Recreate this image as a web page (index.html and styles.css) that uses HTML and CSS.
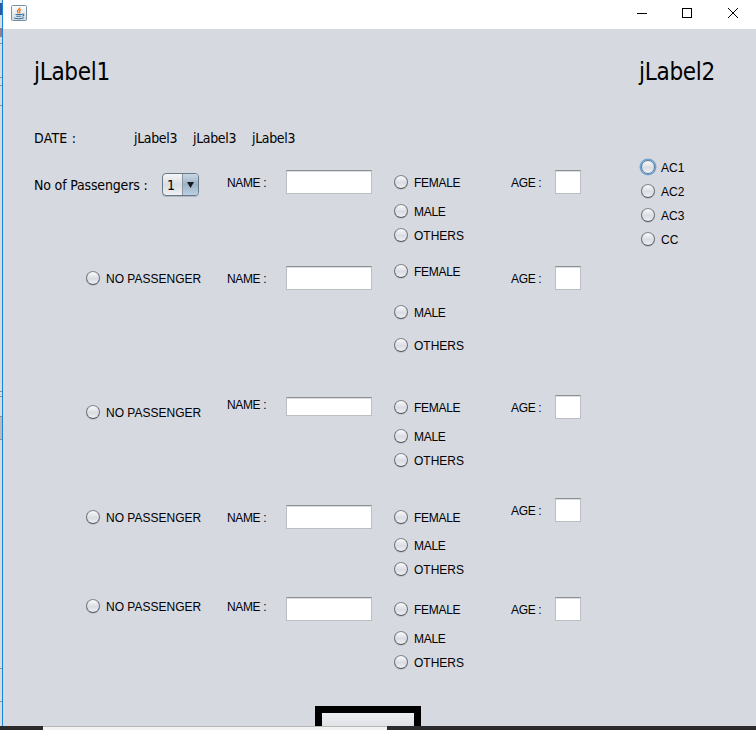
FILE: index.html
```
<!DOCTYPE html>
<html lang="en">
<head>
<meta charset="utf-8">
<title>Passengers</title>
<link rel="stylesheet" href="styles.css">
</head>
<body>
<div class="desktop">
  <div class="edge"><i class="e1"></i><i class="e2"></i><i class="e3"></i><i class="e4"></i><i class="e5"></i><i class="e6"></i><i class="e7"></i><i class="e8"></i><i class="e9"></i><i class="e10"></i></div>
  <div class="window">
    <header class="titlebar">
      <svg class="java" width="16" height="16" viewBox="0 0 16 16">
        <defs><linearGradient id="tile" x2="0" y2="1"><stop offset="0" stop-color="#fff"/><stop offset="1" stop-color="#cfdae2"/></linearGradient></defs>
        <rect x=".5" y=".5" width="15" height="15" rx="1" fill="url(#tile)" stroke="#7590a6"/>
        <path d="M8.800 2.500C9 4 6.200 5 6.400 6.400c.1.7.8 1.100 1 1.900M10.300 4.700C8.400 5.200 8.200 6 8.800 6.900c.4.5 0 1-.5 1.400" fill="none" stroke="#e8791e" stroke-width="1.300"/>
        <path d="M4.500 9.500h6.500M5.200 11.200h5M3.200 13c2 .7 7 .7 9.600-.2M11.200 9.200c2.300-.6 2.200 1.600.2 2" fill="none" stroke="#3d6f97" stroke-width="1.100"/>
      </svg>
      <svg class="controls" width="102" height="12" viewBox="0 0 102 12" fill="none" stroke="#000">
        <path d="M0 6.500h10M45.500 1.500h9v9h-9z" shape-rendering="crispEdges"/>
        <path d="M91 1l10 10M101 1l-10 10"/>
      </svg>
    </header>
    <main class="form">
      <div class="heading"><h1>jLabel1</h1><h1>jLabel2</h1></div>
      <div class="dates"><span class="date">DATE :</span><span>jLabel3</span><span>jLabel3</span><span>jLabel3</span></div>
      <div class="columns">
        <div class="passengers">
          <section class="row r1">
            <div class="count"><span>No of Passengers :</span><div class="combo"><span>1</span><b><svg width="7" height="6"><path d="M0 0h7L3.500 6z" fill="#15181c"/></svg></b></div></div>
            <span class="name">NAME :</span><span class="field"></span>
            <div class="gender"><label class="radio">FEMALE</label><label class="radio">MALE</label><label class="radio">OTHERS</label></div>
            <span class="age">AGE :</span><span class="field agefield"></span>
          </section>
          <section class="row r2">
            <label class="radio none">NO PASSENGER</label>
            <span class="name">NAME :</span><span class="field"></span>
            <div class="gender"><label class="radio">FEMALE</label><label class="radio">MALE</label><label class="radio">OTHERS</label></div>
            <span class="age">AGE :</span><span class="field agefield"></span>
          </section>
          <section class="row r3">
            <label class="radio none">NO PASSENGER</label>
            <span class="name">NAME :</span><span class="field"></span>
            <div class="gender"><label class="radio">FEMALE</label><label class="radio">MALE</label><label class="radio">OTHERS</label></div>
            <span class="age">AGE :</span><span class="field agefield"></span>
          </section>
          <section class="row r4">
            <label class="radio none">NO PASSENGER</label>
            <span class="name">NAME :</span><span class="field"></span>
            <div class="gender"><label class="radio">FEMALE</label><label class="radio">MALE</label><label class="radio">OTHERS</label></div>
            <span class="age">AGE :</span><span class="field agefield"></span>
          </section>
          <section class="row r5">
            <label class="radio none">NO PASSENGER</label>
            <span class="name">NAME :</span><span class="field"></span>
            <div class="gender"><label class="radio">FEMALE</label><label class="radio">MALE</label><label class="radio">OTHERS</label></div>
            <span class="age">AGE :</span><span class="field agefield"></span>
          </section>
        </div>
        <div class="classes"><label class="radio focused">AC1</label><label class="radio">AC2</label><label class="radio">AC3</label><label class="radio">CC</label></div>
      </div>
      <div class="submit"></div>
    </main>
  </div>
</div>
<footer class="taskbar"><div class="search"></div></footer>
</body>
</html>
```
FILE: styles.css
```
*, ::before { box-sizing: border-box; }
body { margin: 0; width: 756px; height: 730px; overflow: hidden; background: #d6d9e0; color: #000; font: 12px/20px "Liberation Sans", Arial, sans-serif; }
.desktop { display: flex; height: 726px; }
.edge { position: relative; flex: none; width: 3px; background: #d9dcdf; border-right: 1px solid #1883d7; }
.edge i { position: absolute; left: 0; width: 2px; height: 1px; background: #8b8d90; }
.edge .e1 { top: 3px; height: 12px; background: #2d5a9c; }
.edge .e2 { top: 28px; height: 9px; background: #a17886; }
.edge .e3 { top: 43px; }
.edge .e4 { top: 77px; }
.edge .e5 { top: 85px; }
.edge .e6 { top: 105px; }
.edge .e7 { top: 391px; height: 6px; background: #d9dcdf; border: solid #8b8d90; border-width: 1px 0; }
.edge .e8 { top: 416px; height: 24px; background: #bbb; border: solid #8b8d90; border-width: 1px 0; }
.edge .e9 { top: 668px; }
.edge .e10 { top: 701px; }
.window { flex: 1; min-width: 0; display: flex; flex-direction: column; }
.titlebar { flex: none; height: 29px; display: flex; justify-content: space-between; background: #fff; padding: 5px 17px 0 8px; }
.controls { margin-top: 2px; }
.form { flex: 1; display: flex; flex-direction: column; background: #d6d9e0; overflow: hidden; }
.heading { display: flex; justify-content: space-between; padding: 27px 41px 0 31px; height: 99px; flex: none; }
h1 { margin: 0; font: 24px/32px "DejaVu Sans Condensed", "DejaVu Sans", sans-serif; font-stretch: condensed; letter-spacing: -.3px; }
.dates { height: 32px; flex: none; display: flex; gap: 16px; padding-left: 31px; font: 14px/20px "DejaVu Sans Condensed", "DejaVu Sans", sans-serif; font-stretch: condensed; letter-spacing: -.35px; }
.dates span { width: 43px; white-space: nowrap; }
.dates .date { width: 84px; letter-spacing: .2px; }
.columns { display: flex; flex: none; }
.passengers { width: 637px; }
.row { display: grid; grid-template-columns: 224px 59px 108px 117px 44px 26px; align-items: start; }
.name { margin-top: var(--name); letter-spacing: -.35px; }
.field { width: 86px; height: var(--fh, 24px); margin-top: var(--field); background: #fff; border: 1px solid #bcbec2; border-top-color: #8e8f93; box-shadow: inset 0 1px #dcdde0; }
.age { margin-top: var(--age); letter-spacing: -.35px; }
.agefield { width: 26px; height: 24px; margin-top: var(--agefield); }
.gender { display: flex; flex-direction: column; margin-top: var(--g1); gap: var(--g2); }
.gender .radio { letter-spacing: -.3px; }
.gender .radio:last-child { margin-top: var(--g3); letter-spacing: 0; }
.none { margin: var(--none) 0 0 83px; }
.r1 { height: 96px; --name: 13px; --field: 10px; --age: 13px; --agefield: 10px; --g1: 13px; --g2: 9px; --g3: -5px; }
.r2 { height: 124px; --none: 13px; --name: 13px; --field: 10px; --age: 13px; --agefield: 10px; --g1: 6px; --g2: 21px; --g3: -8px; }
.r3 { height: 110px; --none: 23px; --name: 15px; --field: 17px; --fh: 19px; --age: 18px; --agefield: 15px; --g1: 18px; --g2: 9px; --g3: -5px; }
.r4 { height: 100px; --none: 18px; --name: 18px; --field: 15px; --age: 11px; --agefield: 8px; --g1: 18px; --g2: 8px; --g3: -4px; }
.r5 { height: 100px; --none: 7px; --name: 7px; --field: 7px; --age: 10px; --agefield: 7px; --g1: 10px; --g2: 9px; --g3: -5px; }
.radio { display: flex; align-items: center; height: 20px; gap: 6px; white-space: nowrap; }
.radio::before { content: ""; flex: none; width: 14px; height: 14px; border-radius: 50%; border: 1px solid #6b6e75; border-top-color: #85888e; border-bottom-color: #50545b; background: linear-gradient(#fbfbfc, #d9dce2 55%, #eff0f3); box-shadow: 0 1px #c0c4cc; position: relative; top: -1px; }
.radio.focused::before { box-shadow: 0 0 0 1.5px #73a4d1; border-color: #52779b; }
.classes { margin-top: -2px; display: flex; flex-direction: column; gap: 4px; padding-left: 1px; }
.count { display: flex; padding: 13px 0 0 31px; align-items: flex-start; }
.count > span { width: 128px; white-space: nowrap; font: 14px/24px "DejaVu Sans Condensed", "DejaVu Sans", sans-serif; font-stretch: condensed; letter-spacing: -.17px; }
.combo { display: flex; width: 37px; height: 23px; border: 1px solid #697889; border-radius: 4px; overflow: hidden; background: linear-gradient(#f6f7f8, #d9dce2 50%, #eff0f2); box-shadow: 0 1px #b2b7bf; font: 14px/22px "DejaVu Sans Condensed", "DejaVu Sans", sans-serif; font-stretch: condensed; }
.combo span { width: 19px; padding-left: 4px; }
.combo b { flex: 1; display: flex; align-items: center; justify-content: center; border-left: 1px solid #8797a7; background: linear-gradient(#cad7e3, #9db3c7 50%, #bbd0e1); }
.submit { flex: none; width: 106px; height: 60px; margin: 16px 0 0 312px; border: 7px solid #000; background: linear-gradient(#ebedf0, #dcdee1 18px); }
.taskbar { height: 4px; background: #2b2b2d; padding-left: 43px; }
.search { width: 344px; height: 4px; background: #f2f2f2; border-top: 1px solid #b7b7b7; }
```
